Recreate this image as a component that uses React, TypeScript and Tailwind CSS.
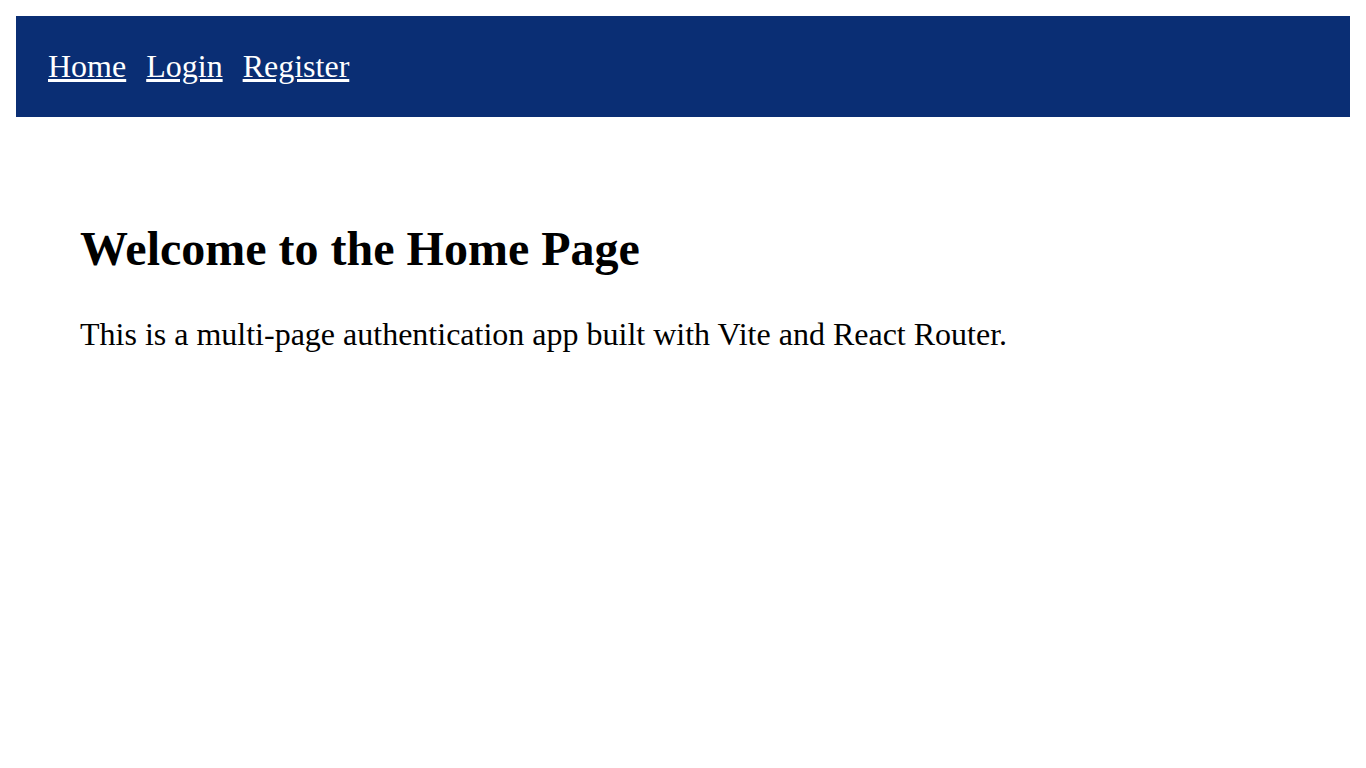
import React from "react";

export default function App() {
  return (
    <div className="m-4 bg-white text-black" style={{ fontFamily: '"Liberation Serif", "Times New Roman", serif' }}>
      <nav className="flex gap-5 bg-[#0a2e74] p-8">
        <a href="#" className="text-[32px] leading-[37px] text-white underline">Home</a>
        <a href="#" className="text-[32px] leading-[37px] text-white underline">Login</a>
        <a href="#" className="text-[32px] leading-[37px] text-white underline">Register</a>
      </nav>
      <main className="px-16 pt-16">
        <h1 className="mt-10 text-[48px] font-bold leading-[55px]">Welcome to the Home Page</h1>
        <p className="mt-[40px] text-[32px] leading-[37px]">
          This is a multi-page authentication app built with Vite and React Router.
        </p>
      </main>
    </div>
  );
}
